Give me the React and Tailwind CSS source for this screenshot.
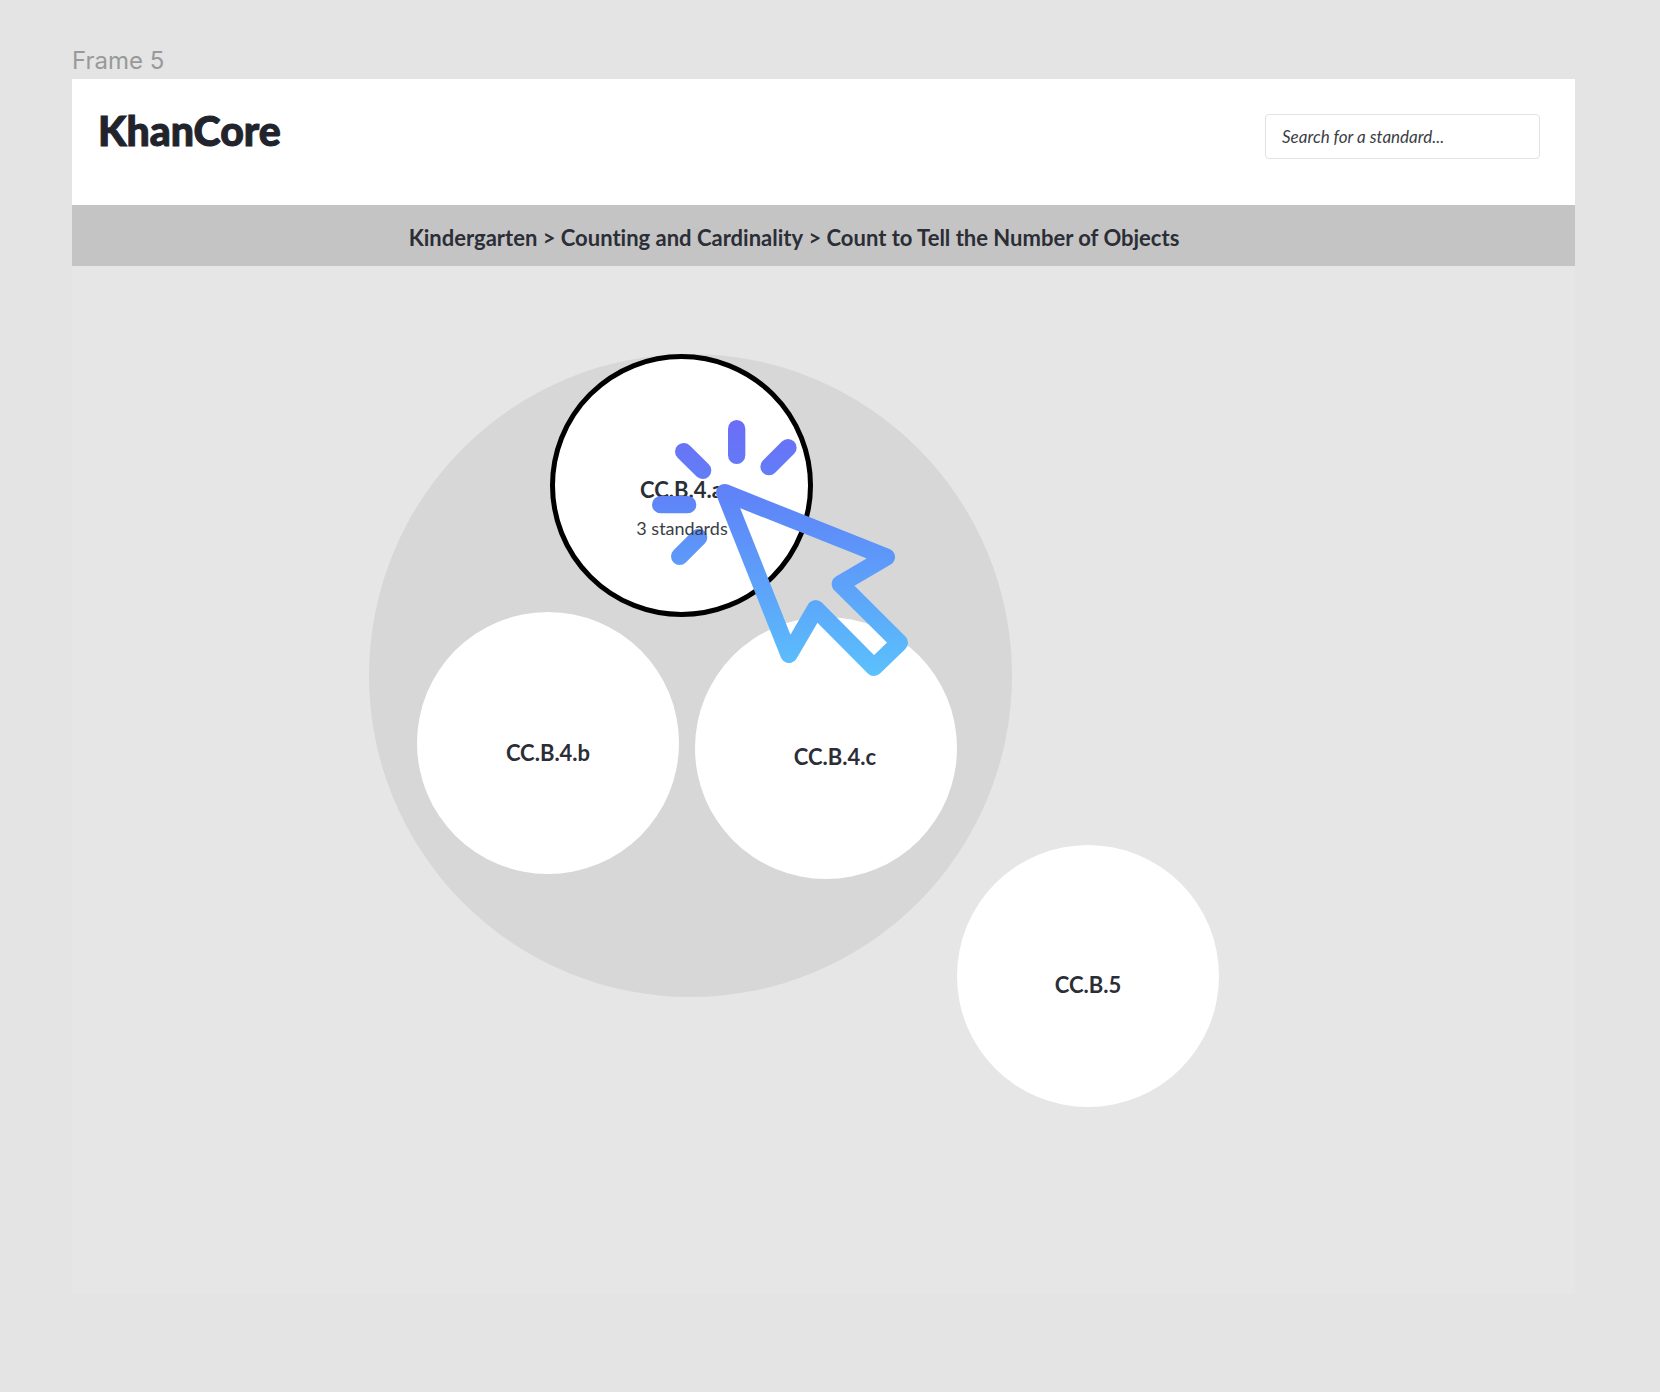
import React from "react";

const crumbs = ["Kindergarten", "Counting and Cardinality", "Count to Tell the Number of Objects"];

const bubbles = [
  { label: "CC.B.4.a", place: "left-[478px] top-[88px] size-[263px] border-[5px] border-black pt-2" },
  { label: "CC.B.4.b", place: "left-[345px] top-[346px] size-[262px] pt-5" },
  { label: "CC.B.4.c", place: "left-[623px] top-[351px] size-[262px] pt-[18px] pl-[18px]" },
  { label: "CC.B.5", place: "left-[885px] top-[579px] size-[262px] pt-[18px]" },
];

function Header() {
  return (
    <header className="flex h-[126px] items-start justify-between bg-white pt-7 pr-[35px] pl-[26px]">
      <h1 className="text-[41px] leading-[48px] font-black text-[#21242c] [-webkit-text-stroke:1px_#21242c]">KhanCore</h1>
      <input
        type="search"
        aria-label="Search for a standard"
        placeholder="Search for a standard..."
        className="mt-[7px] h-[45px] w-[275px] rounded-[4px] border border-[#e2e2e4] bg-white px-4 text-[17px] text-[#21242c] italic outline-none placeholder:text-[#3b3e45]"
      />
    </header>
  );
}

function Breadcrumb() {
  return (
    <nav aria-label="Breadcrumb" className="flex h-[61px] items-center justify-center bg-[#c4c4c4] pt-[5px] pr-[59px]">
      <ol className="flex text-[22px] leading-7 font-bold text-[#2b2e36]">
        {crumbs.map((crumb, i) => (
          <li key={crumb} className="whitespace-pre">
            {i > 0 && " > "}
            <a href="#">{crumb}</a>
          </li>
        ))}
      </ol>
    </nav>
  );
}

function ClickCursor() {
  return (
    <svg
      className="pointer-events-none absolute top-[152px] left-[578px] size-[260px]"
      viewBox="330 234 780 780"
      fill="none"
      stroke="url(#cursor-gradient)"
      strokeWidth="52"
      strokeLinecap="round"
      strokeLinejoin="round"
      aria-hidden="true"
    >
      <defs>
        <linearGradient id="cursor-gradient" gradientUnits="userSpaceOnUse" x1="0" y1="240" x2="0" y2="1008">
          <stop offset="0" stopColor="#6b6cf6" />
          <stop offset="0.35" stopColor="#5e88f8" />
          <stop offset="1" stopColor="#5bc1fc" />
        </linearGradient>
      </defs>
      <path d="M590 266V346M431 335L488 391M744 323L687 380M362 494H443M419 649L476 592M554 458L1039 651L901 732L1078 908L1002 982L827 806L747 943Z" />
    </svg>
  );
}

function BubbleCanvas() {
  return (
    <main className="relative h-[1028px] overflow-hidden bg-[#e6e6e6]">
      <div className="absolute top-[88px] left-[297px] size-[643px] rounded-full bg-[#d7d7d7]" />
      {bubbles.map(({ label, place }) => (
        <button
          key={label}
          type="button"
          className={`absolute flex items-center justify-center rounded-full bg-white text-[22px] leading-7 font-bold text-[#2b2e36] ${place}`}
        >
          {label}
        </button>
      ))}
      <ClickCursor />
      <p className="pointer-events-none absolute top-[250px] left-[478px] w-[264px] text-center text-[18px] leading-6 text-[#3b3e45]">
        3 standards
      </p>
    </main>
  );
}

export default function App() {
  return (
    <div className="min-h-screen bg-[#e4e4e4] pt-[45px] pr-[85px] pb-[98px] pl-[72px] font-['Lato',sans-serif] [font-variant-ligatures:none]">
      <p className="h-[34px] font-['Inter',sans-serif] text-[24px] leading-8 text-[#999999]">Frame 5</p>
      <Header />
      <Breadcrumb />
      <BubbleCanvas />
    </div>
  );
}
